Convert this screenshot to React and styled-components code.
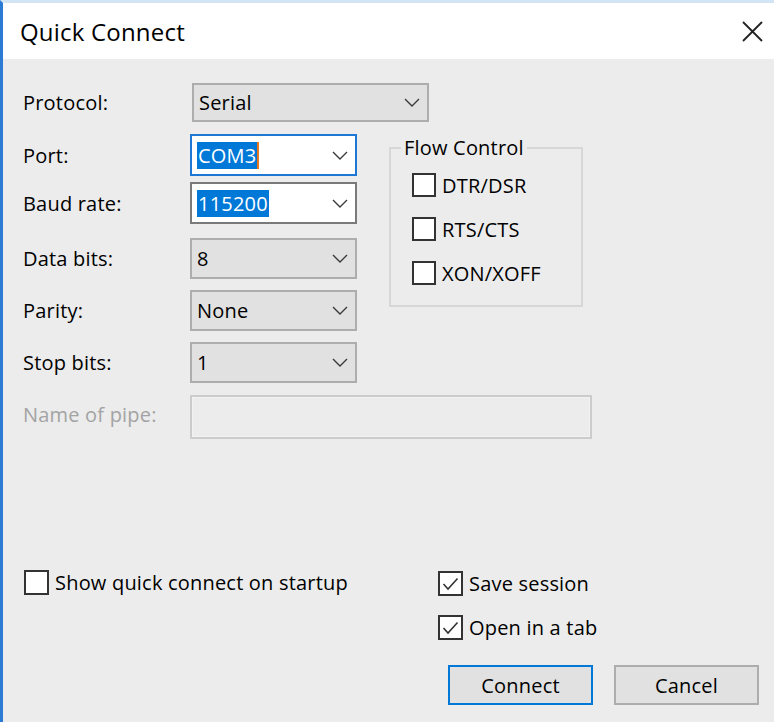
import React from "react";
import styled, { createGlobalStyle } from "styled-components";

const GlobalStyle = createGlobalStyle`
  html, body {
    margin: 0;
    padding: 0;
    background: #ececec;
    overflow: hidden;
  }
  body {
    font-family: "Open Sans", "Noto Sans", "DejaVu Sans", sans-serif;
    color: #000;
    letter-spacing: 0.2px;
  }
`;

const Window = styled.div`
  width: 774px;
  height: 722px;
  box-sizing: border-box;
  border-left: 3px solid #2b7bd4;
  border-top: 3px solid #d3e4f5;
  background: #ececec;
  display: flex;
  flex-direction: column;
`;

const TitleBar = styled.div`
  height: 56px;
  flex: none;
  background: #fff;
  display: flex;
  align-items: center;
  justify-content: space-between;
  padding: 0 11px 0 17px;
  font-size: 24px;
`;

const Body = styled.div`
  padding: 24px 0 0 20px;
`;

const FormGrid = styled.div`
  display: grid;
  grid-template-columns: 167px 167px 32px 203px;
  grid-template-rows: 51px 48px 56px 52px 52px 53px 44px;
  align-items: start;
`;

const Label = styled.div`
  grid-column: 1;
  height: ${p => p.$h}px;
  display: flex;
  align-items: center;
  font-size: 20px;
  color: ${p => (p.$disabled ? "#a3a3a3" : "#000")};
  margin-top: ${p => (p.$disabled ? -3 : 0)}px;
  white-space: nowrap;
`;

const SelectBox = styled.div`
  grid-column: ${p => p.$span || "2"};
  justify-self: start;
  margin-left: ${p => p.$offset || 0}px;
  width: ${p => p.$w}px;
  height: ${p => p.$h}px;
  box-sizing: border-box;
  border: 2px solid ${p => p.$border || "#adadad"};
  background: ${p => p.$bg || "#e1e1e1"};
  display: flex;
  align-items: center;
  justify-content: space-between;
  padding: 0 7px 0 5px;
  font-size: 20px;
`;

const Selected = styled.span`
  background: #0078d7;
  color: #fff;
  line-height: 27px;
  padding: 0 1px;
  border-right: ${p => (p.$caret ? "2px solid #e8761e" : "none")};
`;

const PipeInput = styled.div`
  grid-column: 2 / 5;
  width: 402px;
  height: 44px;
  box-sizing: border-box;
  border: 2px solid #cccccc;
  box-shadow: inset 0 0 0 1px #f2f2f2;
  background: #ececec;
`;

const FlowGroup = styled.fieldset`
  grid-column: 4;
  grid-row: 2 / 6;
  align-self: start;
  margin: 1px 0 0 0;
  width: 194px;
  height: 172px;
  box-sizing: border-box;
  border: 2px solid #d7d7d7;
  padding: 12px 0 0 21px;
  display: flex;
  flex-direction: column;
  gap: 20px;
`;

const Legend = styled.legend`
  margin-left: -11px;
  padding: 0 3px;
  font-size: 20px;
  line-height: 26px;
`;

const CheckRow = styled.label`
  display: flex;
  align-items: center;
  gap: 6px;
  font-size: 20px;
  height: ${p => p.$size || 24}px;
  white-space: nowrap;
`;

const Box = styled.span`
  width: ${p => p.$size || 24}px;
  height: ${p => p.$size || 24}px;
  box-sizing: border-box;
  border: 2px solid #333;
  background: #fff;
  display: flex;
  align-items: center;
  justify-content: center;
  flex: none;
`;

const Bottom = styled.div`
  display: grid;
  grid-template-columns: 415px 1fr;
  margin-top: 131px;
  align-items: start;
`;

const LeftCheck = styled.div`
  margin-left: 1px;
`;

const RightColumn = styled.div`
  margin-top: 1px;
  display: flex;
  flex-direction: column;
  gap: 19px;
`;

const ButtonRow = styled.div`
  display: flex;
  gap: 21px;
  margin: 6px 0 0 10px;
`;

const Button = styled.button`
  width: 145px;
  height: 40px;
  box-sizing: border-box;
  border: 2px solid ${p => (p.$primary ? "#0078d7" : "#adadad")};
  background: #e1e1e1;
  font-family: inherit;
  font-size: 20px;
  letter-spacing: inherit;
  color: #000;
  padding: 0;
`;

const Chevron = () => (
  <svg width="16" height="9" viewBox="0 0 16 9">
    <polyline points="1,1 8,8 15,1" fill="none" stroke="#3a3a3a" strokeWidth="1.4" />
  </svg>
);

const CloseIcon = () => (
  <svg width="21" height="21" viewBox="0 0 21 21">
    <path d="M1 1 L20 20 M20 1 L1 20" stroke="#222" strokeWidth="1.8" />
  </svg>
);

const Checkbox = ({ label, checked, size }) => (
  <CheckRow $size={size}>
    <Box $size={size}>
      {checked && (
        <svg width="17" height="14" viewBox="0 0 17 14">
          <polyline points="1.5,7 6,12 15.5,1.5" fill="none" stroke="#333" strokeWidth="1.6" />
        </svg>
      )}
    </Box>
    {label}
  </CheckRow>
);

const fields = [
  { label: "Port:", value: "COM3", h: 42, border: "#1c78d4", bg: "#fff", selected: true, caret: true },
  { label: "Baud rate:", value: "115200", h: 42, border: "#7a7a7a", bg: "#fff", selected: true },
  { label: "Data bits:", value: "8", h: 41 },
  { label: "Parity:", value: "None", h: 41 },
  { label: "Stop bits:", value: "1", h: 41 }
];

const flowOptions = ["DTR/DSR", "RTS/CTS", "XON/XOFF"];

const App = () => (
  <>
    <GlobalStyle />
    <Window>
      <TitleBar>
        Quick Connect
        <CloseIcon />
      </TitleBar>
      <Body>
        <FormGrid>
          <Label $h={39}>Protocol:</Label>
          <SelectBox $span="2 / 5" $offset={2} $w={237} $h={39}>
            <span>Serial</span>
            <Chevron />
          </SelectBox>
          {fields.map(f => (
            <React.Fragment key={f.label}>
              <Label $h={f.h}>{f.label}</Label>
              <SelectBox $w={167} $h={f.h} $border={f.border} $bg={f.bg}>
                {f.selected
                  ? <Selected $caret={f.caret}>{f.value}</Selected>
                  : <span>{f.value}</span>}
                <Chevron />
              </SelectBox>
            </React.Fragment>
          ))}
          <FlowGroup>
            <Legend>Flow Control</Legend>
            {flowOptions.map(opt => (
              <Checkbox key={opt} label={opt} />
            ))}
          </FlowGroup>
          <Label $h={44} $disabled>Name of pipe:</Label>
          <PipeInput />
        </FormGrid>
        <Bottom>
          <LeftCheck>
            <Checkbox label="Show quick connect on startup" size={25} />
          </LeftCheck>
          <RightColumn>
            <Checkbox label="Save session" checked size={25} />
            <Checkbox label="Open in a tab" checked size={25} />
            <ButtonRow>
              <Button $primary>Connect</Button>
              <Button>Cancel</Button>
            </ButtonRow>
          </RightColumn>
        </Bottom>
      </Body>
    </Window>
  </>
);

export default App;
